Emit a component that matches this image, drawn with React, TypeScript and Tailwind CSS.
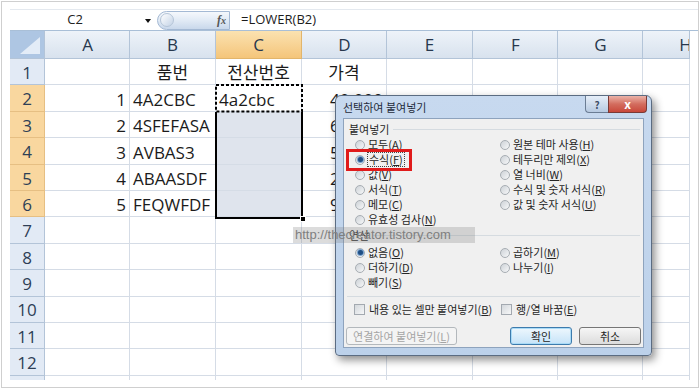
import React from "react";

const SHEET_FONT = "font-['Open_Sans','Noto_Sans_CJK_KR',sans-serif]";
const UI_FONT = "font-['Noto_Sans_CJK_KR','Noto_Sans',sans-serif]";

const LETTERS = ["A", "B", "C", "D", "E", "F", "G", "H"];

// row -> [A, B, C, D]
const DATA: Record<number, string[]> = {
  1: ["", "품번", "전산번호", "가격"],
  2: ["1", "4A2CBC", "4a2cbc", "40,000"],
  3: ["2", "4SFEFASA", "", "60,000"],
  4: ["3", "AVBAS3", "", "50,000"],
  5: ["4", "ABAASDF", "", "20,000"],
  6: ["5", "FEQWFDF", "", "90,000"],
};

function ColHeader({ letter }: { letter: string }) {
  const active = letter === "C";
  const bg = active
    ? "bg-gradient-to-b from-[#fbe2b0] to-[#f4c57a] border-[#e2b56b]"
    : "bg-gradient-to-b from-[#eef3f9] to-[#d8e2ee] border-[#b3c4d8]";
  return (
    <div className={`overflow-hidden border-r border-b ${bg}`}>
      <div className="flex h-full w-[85px] items-center justify-center pt-[1px] text-[17px] text-[#27374d]">
        {letter}
      </div>
    </div>
  );
}

function RowHeader({ n }: { n: number }) {
  const active = n >= 2 && n <= 6;
  return (
    <div
      className={`flex items-center justify-center border-r border-b pt-[2px] text-[17px] text-[#2e3f56] ${
        active ? "border-[#e6bf83] bg-[#f9d79f]" : "border-[#b3c4d8] bg-[#e2eaf5]"
      }`}
    >
      {n <= 12 ? n : ""}
    </div>
  );
}

function Cell({ text, align, shade }: { text: string; align: "l" | "r" | "c"; shade?: boolean }) {
  const a =
    align === "r" ? "justify-end pr-[3px]" : align === "c" ? "justify-center" : "justify-start pl-[3px]";
  return (
    <div
      className={`flex items-center overflow-hidden whitespace-nowrap border-r border-b border-[#d5dce6] pt-[3px] text-[17px] text-[#1b1b1b] ${a} ${
        shade ? "bg-[#dfe4ed]" : "bg-white"
      }`}
    >
      {text}
    </div>
  );
}

function Sheet() {
  const rows = Array.from({ length: 13 }, (_, i) => i + 1);
  return (
    <div className={`relative h-[349px] overflow-hidden ${SHEET_FONT}`}>
      <div className="grid grid-cols-[35px_85px_86px_86px_85px_86px_85px_85px_47px] grid-rows-[28px_repeat(12,26.4px)_20px]">
        <div className="relative border-r border-b border-[#b3c4d8] bg-[#aec6e3]">
          <svg className="absolute inset-0" width="34" height="27" viewBox="0 0 34 27">
            <polygon points="30,6 30,23 10,23" fill="#e3ecf7" />
          </svg>
        </div>
        {LETTERS.map((l) => (
          <ColHeader key={l} letter={l} />
        ))}
        {rows.map((r) => {
          const d = DATA[r] ?? ["", "", "", ""];
          const center = r === 1;
          return (
            <React.Fragment key={r}>
              <RowHeader n={r} />
              <Cell text={d[0]} align="r" />
              <Cell text={d[1]} align={center ? "c" : "l"} />
              <Cell text={d[2]} align={center ? "c" : "l"} shade={r >= 3 && r <= 6} />
              <Cell text={d[3]} align={center ? "c" : "r"} />
              <Cell text="" align="l" />
              <Cell text="" align="l" />
              <Cell text="" align="l" />
              <Cell text="" align="l" />
            </React.Fragment>
          );
        })}
      </div>

      {/* copy marquee on C2 */}
      <svg className="absolute left-[205px] top-[53.4px]" width="88" height="28.4">
        <rect x="1" y="1" width="86" height="26.4" fill="none" stroke="#000" strokeWidth="2" strokeDasharray="3 2" />
      </svg>
      {/* selection C3:C6 */}
      <div className="absolute left-[205px] top-[80.8px] h-[107px] w-[88px] border-x-2 border-b-2 border-black" />
      <div className="absolute left-[290px] top-[185px] h-[6px] w-[6px] border border-white bg-black" />
    </div>
  );
}

function FormulaBar() {
  return (
    <div className={`flex h-[22px] items-center border-t border-b border-t-[#e4e9ef] border-b-[#a9bfd7] ${SHEET_FONT}`}>
      <div className="w-[130px] text-center text-[13px] text-[#222]">C2</div>
      <svg width="8" height="6" viewBox="0 0 8 6" className="ml-[4px] mt-[1px]">
        <polygon points="1,1 7,1 4,5" fill="#111" />
      </svg>
      <div className="relative ml-[5px] flex h-[19px] w-[73px] items-center rounded-l-full border border-[#a4b9d4] bg-gradient-to-b from-[#f5f8fc] via-[#e1eaf5] to-[#c9d8eb]">
        <span className="ml-[2px] h-[14px] w-[14px] rounded-full border border-[#b5c5d8] bg-gradient-to-br from-[#ffffff] to-[#c4d3e6]" />
        <span className="ml-auto mr-[3px] font-['Liberation_Serif',serif] text-[12px] font-bold italic text-[#555]">
          f<span className="text-[10px]">x</span>
        </span>
      </div>
      <div className="ml-[11px] text-[13px] text-[#1c1c1c]">=LOWER(B2)</div>
    </div>
  );
}

function Radio({ checked }: { checked?: boolean }) {
  return (
    <span className="flex h-[10px] w-[10px] shrink-0 items-center justify-center rounded-full border border-[#a7adb3] bg-gradient-to-br from-[#cdd2d7] to-[#f7f8f9]">
      {checked && <span className="h-[5px] w-[5px] rounded-full bg-[#1f4e84] shadow-[0_0_0_1px_#7aa3cf]" />}
    </span>
  );
}

function Opt({ label, k, checked, focus }: { label: string; k: string; checked?: boolean; focus?: boolean }) {
  return (
    <div className="flex h-[15px] items-center gap-[3px] whitespace-nowrap leading-[13px]">
      <Radio checked={checked} />
      <span className={focus ? "px-[1px] outline-1 outline-dotted outline-[#444]" : ""}>
        {label}(<span className="underline underline-offset-1">{k}</span>)
      </span>
    </div>
  );
}

function Check({ label, k }: { label: string; k: string }) {
  return (
    <div className="flex h-[14px] items-center gap-[4px] whitespace-nowrap leading-[13px]">
      <span className="h-[11px] w-[11px] shrink-0 border border-[#a3a9b0] bg-gradient-to-br from-[#d4d8dc] to-[#f6f7f8]" />
      <span>
        {label}(<span className="underline underline-offset-1">{k}</span>)
      </span>
    </div>
  );
}

function Section({ title }: { title: string }) {
  return (
    <div className="flex h-[14px] items-center pl-[5px] leading-[13px]">
      <span>{title}</span>
      <span className="ml-[4px] mr-[3px] flex-1 border-t border-[#d5dbe0]" />
    </div>
  );
}

function Dialog() {
  return (
    <div
      className={`absolute left-[335px] top-[95px] flex h-[261px] w-[317px] flex-col rounded-t-[6px] rounded-b-[4px] border border-[#5b6c82] bg-gradient-to-b from-[#c7d9ef] to-[#bcd1ea] px-[7px] pb-[7px] shadow-[3px_4px_9px_rgba(0,0,0,0.45)] ${UI_FONT}`}
    >
      <div className="flex h-[22px] items-start">
        <span className="pt-[4px] text-[11px] leading-[14px] text-[#1f2b3b]">선택하여 붙여넣기</span>
        <div className="-mr-[3px] ml-auto flex">
          <div className="flex h-[17px] w-[23px] items-center justify-center rounded-bl-[4px] border border-r-0 border-t-0 border-[#6b7d94] bg-gradient-to-b from-[#e6eef8] to-[#b7cae1] text-[10px] font-bold text-[#3d4f66]">
            ?
          </div>
          <div className="flex h-[17px] w-[39px] items-center justify-center rounded-br-[4px] border border-t-0 border-[#7a3a36] bg-gradient-to-b from-[#eab2a8] via-[#d36d5f] to-[#c8473a] text-[12px] font-bold leading-none text-white">
            x
          </div>
        </div>
      </div>
      <div className="flex flex-1 flex-col border border-[#8ea3bd] bg-[#f0f0f0] text-[11px] text-[#262626]">
        <div className="pt-[3px]">
          <Section title="붙여넣기" />
        </div>
        <div className="mt-[1px] grid grid-cols-[145px_1fr] pl-[11px]">
          <div>
            <Opt label="모두" k="A" />
            <Opt label="수식" k="F" checked focus />
            <Opt label="값" k="V" />
            <Opt label="서식" k="T" />
            <Opt label="메모" k="C" />
            <Opt label="유효성 검사" k="N" />
          </div>
          <div>
            <Opt label="원본 테마 사용" k="H" />
            <Opt label="테두리만 제외" k="X" />
            <Opt label="열 너비" k="W" />
            <Opt label="수식 및 숫자 서식" k="R" />
            <Opt label="값 및 숫자 서식" k="U" />
          </div>
        </div>
        <div className="mt-[1px]">
          <Section title="연산" />
        </div>
        <div className="mt-[3px] grid grid-cols-[145px_1fr] pl-[11px]">
          <div>
            <Opt label="없음" k="O" checked />
            <Opt label="더하기" k="D" />
            <Opt label="빼기" k="S" />
          </div>
          <div>
            <Opt label="곱하기" k="M" />
            <Opt label="나누기" k="I" />
          </div>
        </div>
        <div className="mx-[3px] mt-[6px] border-t border-[#d5dbe0]" />
        <div className="mt-[5px] grid grid-cols-[147px_1fr] pl-[10px]">
          <Check label="내용 있는 셀만 붙여넣기" k="B" />
          <Check label="행/열 바꿈" k="E" />
        </div>
        <div className="mt-[11px] flex items-center px-[2px] leading-[13px]">
          <div className="flex h-[18px] w-[111px] items-center justify-center rounded-[3px] border border-[#b3b8bc] bg-[#f4f4f4] text-[#a4a4a4]">
            연결하여 붙여넣기(<span className="underline underline-offset-1">L</span>)
          </div>
          <div className="ml-auto flex h-[18px] w-[62px] items-center justify-center rounded-[3px] border border-[#3d7bad] bg-gradient-to-b from-[#eef7fd] to-[#c6e3f8] shadow-[inset_0_0_0_1px_#a9dbf7]">
            확인
          </div>
          <div className="ml-[7px] flex h-[18px] w-[62px] items-center justify-center rounded-[3px] border border-[#767676] bg-gradient-to-b from-[#f6f6f6] to-[#dcdcdc]">
            취소
          </div>
        </div>
      </div>
    </div>
  );
}

export default function App() {
  return (
    <div className="relative h-[391px] w-[700px] overflow-hidden bg-white px-[1px] pt-[1px]">
      <div className="h-[387px] border border-[#cfcfcf] pl-[8px] pt-[7px]">
        <FormulaBar />
        <Sheet />
      </div>

      <Dialog />

      {/* red highlight around 수식(F) */}
      <div className="absolute left-[346px] top-[149px] h-[22px] w-[66px] border-[3px] border-[#e01b1b]" />

      {/* blog watermark */}
      <div className="absolute left-[293px] top-[227px] flex h-[16px] w-[182px] items-center bg-[rgba(130,130,130,0.28)] pl-[2px] font-['Liberation_Sans',sans-serif] text-[13px] text-[#7f7f7f]">
        http://thecreator.tistory.com
      </div>
    </div>
  );
}
